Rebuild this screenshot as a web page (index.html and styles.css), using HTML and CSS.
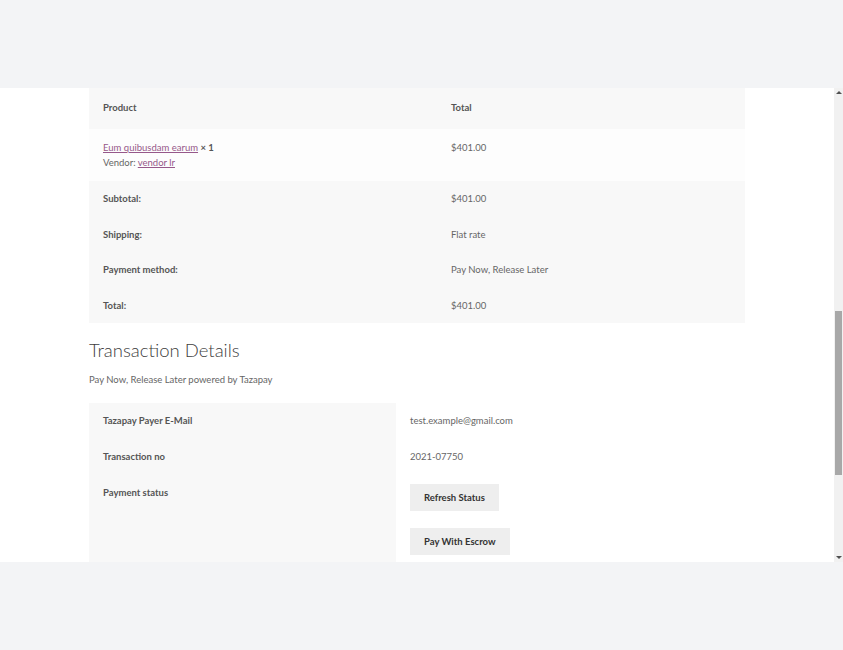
FILE: index.html
```html
<!DOCTYPE html>
<html lang="en">
<head>
<meta charset="utf-8">
<title>Order details</title>
<link rel="stylesheet" href="styles.css">
</head>
<body>
<div class="top-space"></div>
<div class="frame">
  <div class="viewport">
    <div class="content">
      <table class="order-table">
        <thead>
          <tr><th class="col-a">Product</th><th class="col-b">Total</th></tr>
        </thead>
        <tbody>
          <tr class="item-row">
            <td><a href="#">Eum quibusdam earum</a> <strong class="qty">× 1</strong><br>Vendor: <a href="#">vendor lr</a></td>
            <td>$401.00</td>
          </tr>
        </tbody>
        <tfoot>
          <tr><th>Subtotal:</th><td>$401.00</td></tr>
          <tr><th>Shipping:</th><td>Flat rate</td></tr>
          <tr><th>Payment method:</th><td>Pay Now, Release Later</td></tr>
          <tr><th>Total:</th><td>$401.00</td></tr>
        </tfoot>
      </table>

      <h2 class="section-title">Transaction Details</h2>
      <p class="powered">Pay Now, Release Later powered by Tazapay</p>

      <table class="tx-table">
        <tr><th>Tazapay Payer E-Mail</th><td>test.example@gmail.com</td></tr>
        <tr><th>Transaction no</th><td>2021-07750</td></tr>
        <tr><th>Payment status</th>
          <td class="actions">
            <button class="btn" type="button">Refresh Status</button>
            <button class="btn" type="button">Pay With Escrow</button>
          </td>
        </tr>
      </table>
    </div>
  </div>
  <div class="scrollbar">
    <div class="arrow up"></div>
    <div class="track">
      <div class="track-before"></div>
      <div class="thumb"></div>
      <div class="track-after"></div>
    </div>
    <div class="arrow down"></div>
  </div>
</div>
<div class="bottom-space"></div>
</body>
</html>
```

FILE: styles.css
```css
html, body {
  margin: 0;
  padding: 0;
  background: #f3f4f6;
  font-family: "Lato", "Open Sans", sans-serif;
  font-size: 9.5px;
  color: #666666;
}

.top-space { height: 88px; }
.bottom-space { height: 88px; }

.frame {
  display: flex;
  height: 474px;
  background: #ffffff;
}

.viewport {
  flex: 1;
  overflow: hidden;
}

.content {
  margin-left: 89px;
  width: 656px;
}

table {
  width: 100%;
  border-collapse: collapse;
  border-spacing: 0;
}

th, td {
  text-align: left;
  vertical-align: top;
  line-height: 16px;
  padding: 10px 14px;
}

th {
  font-weight: 700;
  color: #555555;
}

.order-table { background: #f8f8f8; }
.order-table thead th { padding: 12px 14px 13px; }
.order-table .col-a { width: 320px; }
.item-row td { background: #fdfdfd; line-height: 15.5px; padding: 10.5px 14px 10.5px; }
.order-table tfoot th, .order-table tfoot td { padding: 10px 14px 9.5px; }

a {
  color: #96588a;
  text-decoration: underline;
}

.qty { color: #555555; }

.section-title {
  margin: 13px 0 0;
  font-size: 18.5px;
  line-height: 28px;
  font-weight: 300;
  color: #404040;
}

.powered {
  margin: 8px 0 15px;
  line-height: 16px;
}

.tx-table th {
  background: #f8f8f8;
  width: 279px;
  padding: 10px 14px 10px;
}
.tx-table td { padding: 10px 14px 10px; }
.tx-table td.actions { padding-top: 9px; }

.actions {
  display: flex;
  flex-direction: column;
  align-items: flex-start;
  gap: 17px;
}

.btn {
  font-family: inherit;
  font-size: 9.5px;
  font-weight: 700;
  color: #333333;
  background: #eeeeee;
  border: 0;
  padding: 0 14px;
  height: 27px;
  line-height: 27px;
}

.scrollbar {
  width: 9px;
  display: flex;
  flex-direction: column;
  background: #f1f1f1;
}

.arrow {
  height: 9px;
  display: flex;
  align-items: center;
  justify-content: center;
}
.arrow::before {
  content: "";
  width: 0;
  height: 0;
  border-left: 3px solid transparent;
  border-right: 3px solid transparent;
}
.arrow.up::before { border-bottom: 3px solid #505050; }
.arrow.down::before { border-top: 3px solid #505050; }

.track {
  flex: 1;
  display: flex;
  flex-direction: column;
}
.track-before { height: 214px; }
.thumb {
  height: 164px;
  margin: 0 1px;
  background: #a8a8a8;
}
.track-after { flex: 1; }
```
